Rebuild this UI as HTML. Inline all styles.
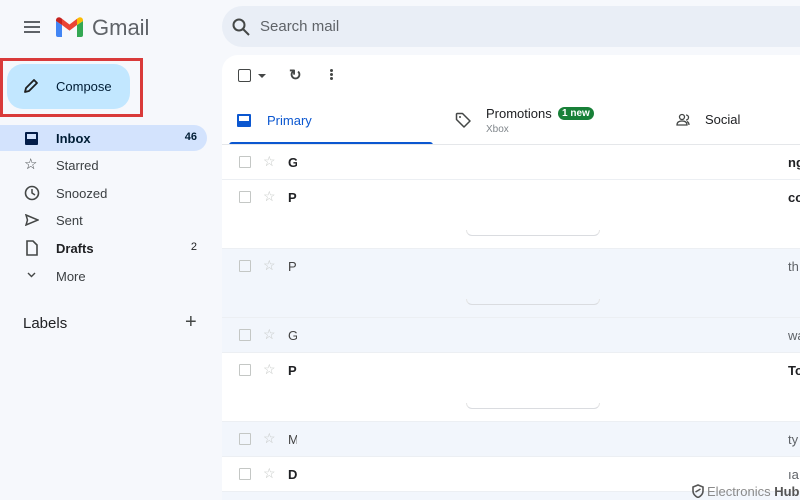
<!DOCTYPE html>
<html style="overflow:hidden"><head><style>
*{margin:0;padding:0;box-sizing:border-box}
html,body{width:800px;height:500px;overflow:hidden}
body{background:#f6f8fc;font-family:"Liberation Sans",Arial,sans-serif;color:#202124;position:relative}
.a{position:absolute}
.nav{position:absolute;left:0;height:26px;width:207px;font-size:13px;color:#3c4043}
.nav span{position:absolute;left:56px;top:6px}
.nav i{position:absolute;left:24px;top:5px;width:16px;height:16px}
.nav b.c{position:absolute;right:10px;top:6px;font-size:11px;font-weight:normal}
.row{position:absolute;left:222px;width:578px;border-bottom:1px solid #eceff3}
.cb{position:absolute;left:17px;width:12px;height:12px;border:1.5px solid #c4c7c5;border-radius:1px}
.st{position:absolute;left:41px;font-size:14px;color:#c4c7c5}
.sd{position:absolute;left:66px;font-size:13px;width:9px;overflow:hidden}
.rt{position:absolute;left:566px;font-size:13px}
.pill{position:absolute;left:244px;width:134px;height:6px;border-bottom:1px solid #dadce0;border-left:1px solid #e5e5e5;border-right:1px solid #e5e5e5;border-radius:0 0 8px 8px}
</style></head><body>
<div class="a" style="left:24px;top:21px;width:16px;height:2px;background:#5f6368;box-shadow:0 5px 0 #5f6368,0 10px 0 #5f6368"></div>
<svg class="a" style="left:56px;top:17px" width="27" height="20" viewBox="0 0 27 20"><path d="M0 4v14a2 2 0 0 0 2 2h4V8z" fill="#4285f4"/><path d="M21 20h4a2 2 0 0 0 2-2V4l-6 4z" fill="#34a853"/><path d="M21 8l6-4V3a3 3 0 0 0-5-2l-1 .8z" fill="#fbbc04"/><path d="M6 8V1.8L13.5 7.5 21 1.8V8l-7.5 5.6z" fill="#ea4335"/><path d="M0 3v1l6 4V1.8L5 1A3 3 0 0 0 0 3z" fill="#c5221f"/></svg>
<div class="a" style="left:92px;top:15px;font-size:22px;color:#5f6368">Gmail</div>
<div class="a" style="left:222px;top:6px;width:600px;height:41px;background:#e9eef6;border-radius:22px"></div>
<svg class="a" style="left:232px;top:18px" width="18" height="18" viewBox="0 0 18 18"><circle cx="7" cy="7" r="5.5" fill="none" stroke="#444746" stroke-width="2"/><path d="M11 11l6 6" stroke="#444746" stroke-width="2"/></svg>
<div class="a" style="left:260px;top:18px;font-size:15px;color:#5f6368">Search mail</div>
<div class="a" style="left:0;top:58px;width:143px;height:59px;border:3px solid #d93a3a"></div>
<div class="a" style="left:7px;top:64px;width:123px;height:45px;background:#c2e7ff;border-radius:16px"></div>
<svg class="a" style="left:23px;top:78px" width="16" height="16" viewBox="0 0 16 16"><path d="M2 14l1-4 8-8 3 3-8 8z" fill="none" stroke="#1f1f1f" stroke-width="1.8" stroke-linejoin="round"/></svg>
<div class="a" style="left:56px;top:79px;font-size:13px;color:#001d35">Compose</div>
<div class="nav" style="top:125px;background:#d3e3fd;border-radius:0 13px 13px 0;color:#001d35;font-weight:bold"><i style="left:25px;top:7px;width:13px;height:13px;background:#041e49;border-radius:1px"><i style="left:2px;top:2px;width:9px;height:5px;background:#d3e3fd"></i></i><span>Inbox</span><b class="c" style="font-weight:bold;right:10px">46</b></div>
<div class="nav" style="top:152px"><i style="font-style:normal;font-size:15px;top:3px;left:24px">☆</i><span>Starred</span></div>
<div class="nav" style="top:180px"><svg class="a" style="left:24px;top:5px" width="16" height="16"><circle cx="8" cy="8" r="6.5" fill="none" stroke="#444746" stroke-width="1.6"/><path d="M8 4v4l3 2" fill="none" stroke="#444746" stroke-width="1.5"/></svg><span>Snoozed</span></div>
<div class="nav" style="top:207px"><svg class="a" style="left:25px;top:7px" width="14" height="12"><path d="M1 1l12 5-12 5 1.5-5z" fill="none" stroke="#444746" stroke-width="1.5"/></svg><span>Sent</span></div>
<div class="nav" style="top:235px;font-weight:bold;color:#202124"><svg class="a" style="left:26px;top:5px" width="12" height="16"><path d="M1 1h6l4 4v10H1z" fill="none" stroke="#444746" stroke-width="1.6"/></svg><span>Drafts</span><b class="c">2</b></div>
<div class="nav" style="top:263px"><svg class="a" style="left:27px;top:9px" width="9" height="6"><path d="M1 1l3.5 3.5L8 1" fill="none" stroke="#444746" stroke-width="1.4"/></svg><span>More</span></div>
<div class="a" style="left:23px;top:315px;font-size:15px;color:#202124">Labels</div>
<div class="a" style="left:185px;top:311px;font-size:20px;color:#444746;font-weight:300">+</div>
<div class="a" style="left:222px;top:55px;width:600px;height:460px;background:#fff;border-radius:16px 0 0 0"></div>
<div class="a" style="left:238px;top:69px;width:13px;height:13px;border:1.8px solid #444746;border-radius:2px"></div>
<div class="a" style="left:258px;top:74px;border:4px solid transparent;border-top:4px solid #444746"></div>
<div class="a" style="left:289px;top:66px;font-size:15px;color:#444746;font-weight:bold">↻</div>
<div class="a" style="left:330px;top:69px;width:3px;height:3px;background:#444746;border-radius:50%;box-shadow:0 4px 0 #444746,0 8px 0 #444746"></div>
<div class="a" style="left:237px;top:114px;width:14px;height:13px;background:#0b57d0;border-radius:1px"><div class="a" style="left:2px;top:2px;width:10px;height:5px;background:#fff"></div></div>
<div class="a" style="left:267px;top:113px;font-size:13px;color:#0b57d0">Primary</div>
<div class="a" style="left:229px;top:142px;width:204px;height:3px;background:#0b57d0;border-radius:3px 3px 0 0"></div>
<div class="a" style="left:222px;top:144px;width:578px;height:1px;background:#e5e7ea"></div>
<svg class="a" style="left:455px;top:112px" width="16" height="16"><path d="M1.5 2v5.5l7.5 7.5 6-6L7.5 1.5H2z" fill="none" stroke="#444746" stroke-width="1.5" stroke-linejoin="round"/><circle cx="5" cy="5" r="1" fill="#444746"/></svg>
<div class="a" style="left:486px;top:106px;font-size:13px;color:#202124">Promotions</div>
<div class="a" style="left:558px;top:107px;background:#188038;color:#fff;font-size:10px;padding:1px 4px;border-radius:7px;font-weight:bold">1 new</div>
<div class="a" style="left:486px;top:124px;font-size:10px;color:#80868b">Xbox</div>
<svg class="a" style="left:676px;top:113px" width="16" height="14"><circle cx="6" cy="4" r="2.5" fill="none" stroke="#444746" stroke-width="1.3"/><path d="M1 12c0-3 2-4 5-4s5 1 5 4z" fill="none" stroke="#444746" stroke-width="1.3"/><path d="M10 2a2.5 2.5 0 0 1 0 5M13 12c0-2-1-3-2-3.5" fill="none" stroke="#444746" stroke-width="1.3"/></svg>
<div class="a" style="left:705px;top:112px;font-size:13px;color:#202124">Social</div>
<div class="row" style="top:145px;height:35px;background:#fff"><div class="cb" style="top:11px"></div><div class="st" style="top:8px">☆</div><b class="sd" style="top:10px">G</b><b class="rt" style="top:10px">ng</b></div>
<div class="row" style="top:180px;height:69px;background:#fff"><div class="cb" style="top:11px"></div><div class="st" style="top:8px">☆</div><b class="sd" style="top:10px">P</b><b class="rt" style="top:10px">co</b><div class="pill" style="top:50px"></div></div>
<div class="row" style="top:249px;height:69px;background:#f2f6fc"><div class="cb" style="top:11px"></div><div class="st" style="top:8px">☆</div><span class="sd" style="top:10px;color:#444">P</span><span class="rt" style="top:10px;color:#5f6368">th</span><div class="pill" style="top:50px"></div></div>
<div class="row" style="top:318px;height:35px;background:#f2f6fc"><div class="cb" style="top:11px"></div><div class="st" style="top:8px">☆</div><span class="sd" style="top:10px;color:#444">G</span><span class="rt" style="top:10px;color:#5f6368">wa</span></div>
<div class="row" style="top:353px;height:69px;background:#fff"><div class="cb" style="top:11px"></div><div class="st" style="top:8px">☆</div><b class="sd" style="top:10px">P</b><b class="rt" style="top:10px">To</b><div class="pill" style="top:50px"></div></div>
<div class="row" style="top:422px;height:35px;background:#f2f6fc"><div class="cb" style="top:11px"></div><div class="st" style="top:8px">☆</div><span class="sd" style="top:10px;color:#444">M</span><span class="rt" style="top:10px;color:#5f6368">ty</span></div>
<div class="row" style="top:457px;height:35px;background:#fff"><div class="cb" style="top:11px"></div><div class="st" style="top:8px">☆</div><b class="sd" style="top:10px">D</b><span class="rt" style="top:10px;color:#5f6368">ıa</span></div>
<div class="row" style="top:492px;height:10px;background:#f2f6fc"></div>
<svg class="a" style="left:692px;top:484px" width="12" height="14"><path d="M6 1l5 2v4c0 3-2.5 5.5-5 6.5C3.5 12.5 1 10 1 7V3z" fill="none" stroke="#555" stroke-width="1.6"/><path d="M3.5 8l5-3" stroke="#555" stroke-width="1.5"/></svg>
<div class="a" style="left:707px;top:484px;font-size:13px;color:#8a8a8a">Electronics <b style="color:#555">Hub</b></div>
</body></html>
